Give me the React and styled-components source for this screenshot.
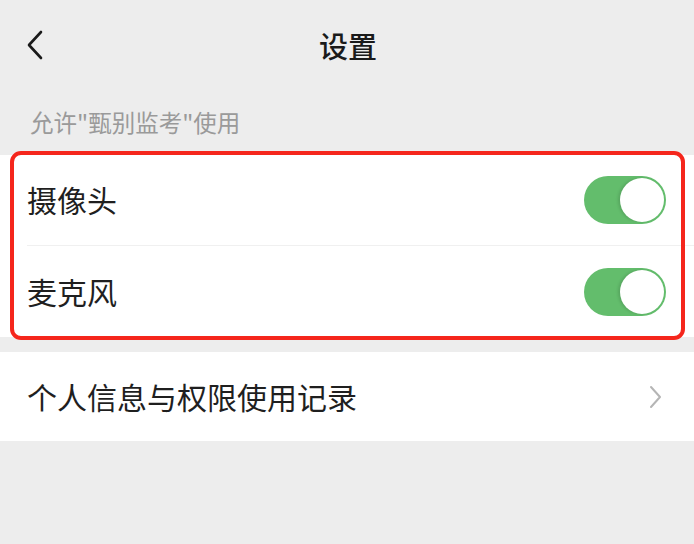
import React, { useState } from "react";
import styled, { createGlobalStyle } from "styled-components";

const GlobalStyle = createGlobalStyle`
	html, body {
		margin: 0;
		padding: 0;
		background: #ededed;
		font-family: "Noto Sans CJK SC", "Noto Sans", sans-serif;
	}
`;

function BackIcon() {
	return (
		<svg width="20" height="30" viewBox="0 0 20 30">
			<path d="M16 2 L4 15 L16 28" fill="none" stroke="#1a1a1a" strokeWidth="2.6" strokeLinecap="round" strokeLinejoin="round" />
		</svg>
	);
}

function ArrowIcon() {
	return (
		<svg width="14" height="24" viewBox="0 0 14 24">
			<path d="M3 2 L12 12 L3 22" fill="none" stroke="#b5b5b5" strokeWidth="2" strokeLinecap="round" strokeLinejoin="round" />
		</svg>
	);
}

function App() {
	const [camera, setCamera] = useState(true);
	const [mic, setMic] = useState(true);

	return (
		<Page>
			<GlobalStyle />
			<Header>
				<BackButton>
					<BackIcon />
				</BackButton>
				<Title>设置</Title>
			</Header>

			<SectionLabel>允许"甄别监考"使用</SectionLabel>

			<Group>
				<Row>
					<RowText>摄像头</RowText>
					<Switch $on={camera} onClick={() => setCamera(!camera)}>
						<Thumb $on={camera} />
					</Switch>
				</Row>
				<Row $last>
					<RowText>麦克风</RowText>
					<Switch $on={mic} onClick={() => setMic(!mic)}>
						<Thumb $on={mic} />
					</Switch>
				</Row>
				<Highlight />
			</Group>

			<Group $gap>
				<Row $last $height={89}>
					<RowText>个人信息与权限使用记录</RowText>
					<ArrowBox>
						<ArrowIcon />
					</ArrowBox>
				</Row>
			</Group>
		</Page>
	);
}

const Page = styled.div`
	width: 694px;
	min-height: 544px;
	background: #ededed;
`;

const Header = styled.div`
	height: 90px;
	display: flex;
	align-items: center;
	justify-content: center;
	position: relative;
`;

const BackButton = styled.div`
	position: absolute;
	left: 25px;
	top: 30px;
	display: flex;
`;

const Title = styled.h1`
	margin: 0;
	font-size: 29px;
	font-weight: 500;
	color: #1a1a1a;
	padding-left: 2px;
`;

const SectionLabel = styled.div`
	height: 65px;
	padding-left: 30px;
	display: flex;
	align-items: center;
	padding-bottom: 2px;
	box-sizing: border-box;
	font-size: 23.5px;
	color: #9a9a9a;
`;

const Group = styled.div`
	position: relative;
	background: #fff;
	margin-top: ${(p) => (p.$gap ? "15px" : "0")};
`;

const Row = styled.div`
	height: ${(p) => p.$height || 91}px;
	margin-left: 27px;
	padding-right: 28px;
	display: flex;
	align-items: center;
	justify-content: space-between;
	box-sizing: border-box;
	border-bottom: ${(p) => (p.$last ? "none" : "1px solid #f0f0f0")};
`;

const RowText = styled.span`
	font-size: 30px;
	color: #1f1f1f;
	padding-bottom: 2px;
`;

const Switch = styled.div`
	width: 82px;
	height: 48px;
	border-radius: 24px;
	background: ${(p) => (p.$on ? "#63bd6c" : "#e5e5e5")};
	position: relative;
	cursor: pointer;
`;

const Thumb = styled.div`
	position: absolute;
	top: 2px;
	left: ${(p) => (p.$on ? "36px" : "2px")};
	width: 44px;
	height: 44px;
	border-radius: 50%;
	background: #fff;
	box-shadow: -2px 0 3px rgba(0, 0, 0, 0.12);
`;

const Highlight = styled.div`
	position: absolute;
	top: -4px;
	bottom: -3px;
	left: 10px;
	right: 9px;
	border: 4px solid #f5261c;
	border-radius: 11px;
	pointer-events: none;
`;

const ArrowBox = styled.div`
	display: flex;
	padding-right: 4px;
`;

export default App;
